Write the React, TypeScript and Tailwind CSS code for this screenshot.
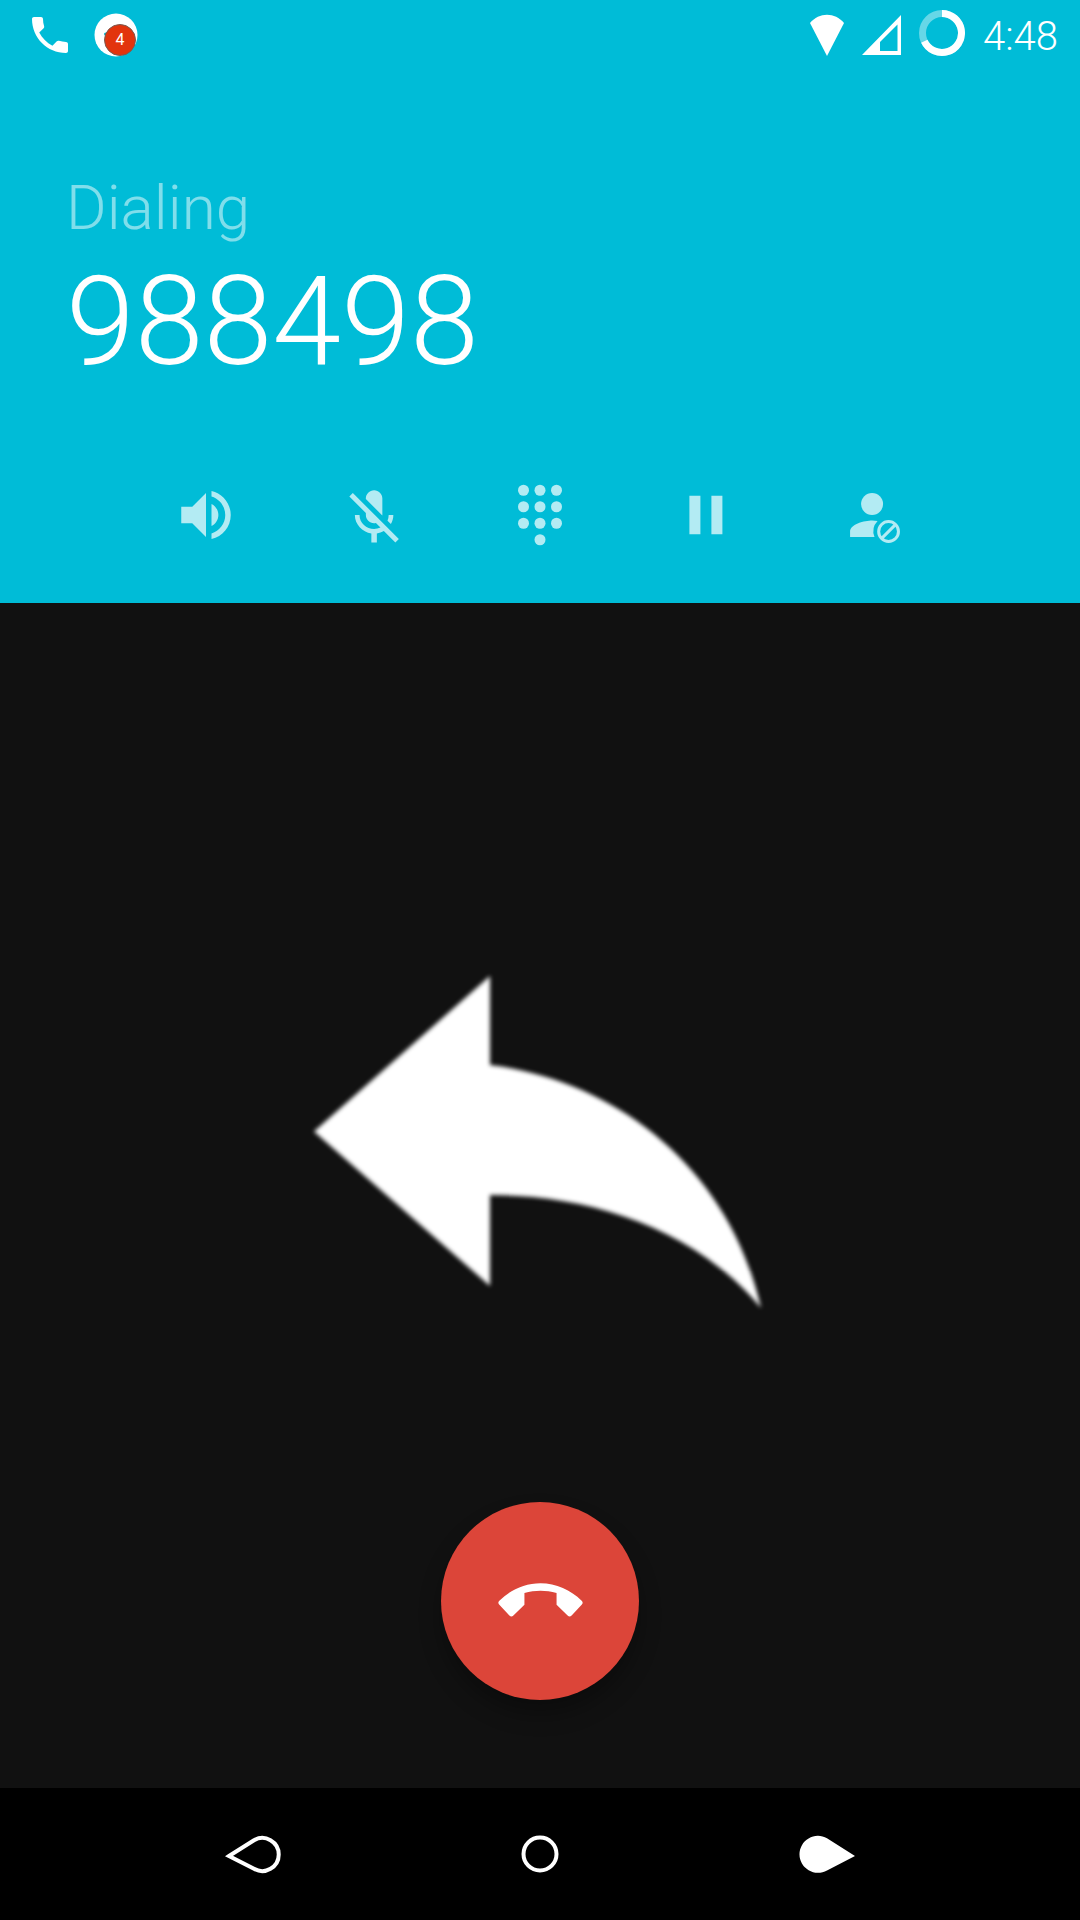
import type { ReactNode } from "react";

function StatusBar() {
  return (
    <div className="flex h-[70px] items-center justify-between pr-[22px] pl-[26px]">
      <div className="flex items-center gap-5">
        <svg className="size-12" viewBox="0 0 24 24" fill="#fff" aria-hidden="true">
          <path d="M20 15.5c-1.25 0-2.45-.2-3.57-.57-.35-.11-.74-.03-1.02.24l-2.2 2.2c-2.83-1.44-5.15-3.75-6.59-6.58l2.2-2.21c.28-.27.36-.66.25-1.01C8.7 6.45 8.5 5.25 8.5 4c0-.55-.45-1-1-1H4c-.55 0-1 .45-1 1 0 9.39 7.61 17 17 17 .55 0 1-.45 1-1v-3.5c0-.55-.45-1-1-1z" />
        </svg>
        <div className="relative size-11">
          <svg className="size-11" viewBox="0 0 44 44" aria-hidden="true">
            <circle cx="22" cy="22" r="21.5" fill="#fff" />
            <circle cx="11.5" cy="21" r="1.5" fill="#00bcd7" />
          </svg>
          <span className="absolute top-[11px] left-[10px] flex size-8 items-center justify-center rounded-full border border-[#7a5a50] bg-[#e2340d] text-base leading-4 text-white">
            4
          </span>
        </div>
      </div>
      <div className="flex items-center gap-[18px]">
        <svg className="h-[42px] w-[34px]" viewBox="0 0 34 42" fill="#fff" aria-hidden="true">
          <path d="M0 9C9-2 25-2 34 9L17 42Z" />
        </svg>
        <svg className="h-10 w-[39px]" viewBox="0 0 39 40" aria-hidden="true">
          <path fill="#fff" fillRule="evenodd" d="M39 0V40H0ZM35.5 9.5L18 27V36H35.5Z" />
        </svg>
        <svg className="h-[50px] w-[46px]" viewBox="0 0 46 50" fill="none" strokeWidth="7" aria-hidden="true">
          <circle cx="23" cy="23" r="19.5" stroke="#fff" strokeOpacity=".4" />
          <path d="M23 3.500A19.500 19.500 0 1 1 5.300 31.200" stroke="#fff" />
        </svg>
        <span className="pt-1 text-[40px] leading-[46px] font-light text-white">4:48</span>
      </div>
    </div>
  );
}

function Control({ label, viewBox = "0 0 24 24", children }: { label: string; viewBox?: string; children: ReactNode }) {
  return (
    <button type="button" aria-label={label} className="flex justify-center text-[#b3ebf3]">
      <svg className="size-[66px]" viewBox={viewBox} fill="currentColor" aria-hidden="true">
        {children}
      </svg>
    </button>
  );
}

const dots = [
  [6, 3], [12, 3], [18, 3],
  [6, 9], [12, 9], [18, 9],
  [6, 15], [12, 15], [18, 15],
  [12, 21],
];

function CallControls() {
  return (
    <div className="mt-[88px] grid grid-cols-5 px-[122px] pb-[55px]">
      <Control label="Speaker">
        <path d="M3 9v6h4l5 5V4L7 9H3zm13.5 3c0-1.77-1.02-3.29-2.5-4.03v8.05c1.48-.73 2.5-2.25 2.5-4.02zM14 3.23v2.06c2.89.86 5 3.54 5 6.71s-2.11 5.85-5 6.71v2.06c4.01-.91 7-4.49 7-8.77s-2.99-7.86-7-8.77z" />
      </Control>
      <Control label="Mute" viewBox="-.4 -1 24 24">
        <path d="M19 11h-1.7c0 .74-.16 1.43-.43 2.05l1.23 1.23c.56-.98.9-2.09.9-3.28zm-4.02.17c0-.06.02-.11.02-.17V5c0-1.66-1.34-3-3-3S9 3.34 9 5v.18l5.98 5.99zM4.27 3L3 4.27l6.01 6.01V11c0 1.66 1.33 3 2.99 3 .22 0 .44-.03.65-.08l1.66 1.66c-.71.33-1.5.52-2.31.52-2.76 0-5.3-2.1-5.3-5.1H5c0 3.41 2.72 6.23 6 6.72V21h2v-3.28c.91-.13 1.77-.45 2.54-.9L19.73 21 21 19.73 4.27 3z" />
      </Control>
      <Control label="Dialpad">
        {dots.map(([x, y]) => (
          <circle key={`${x}-${y}`} cx={x} cy={y} r="2" />
        ))}
      </Control>
      <Control label="Hold" viewBox=".4 0 24 24">
        <path d="M6 19h4V5H6v14zm8-14v14h4V5h-4z" />
      </Control>
      <Control label="Block caller" viewBox="-.3 0 24 24">
        <circle cx="11" cy="8" r="4" />
        <path d="M11 14c-2.670 0-8 1.340-8 4v2h8.880A5.500 5.500 0 0 1 13 14.200Q12 14 11 14z" />
        <g fill="none" stroke="currentColor" strokeWidth="1.1">
          <circle cx="17" cy="18" r="3.6" />
          <path d="M14.500 20.500l5-5" />
        </g>
      </Control>
    </div>
  );
}

function NavButton({ label, children }: { label: string; children: ReactNode }) {
  return (
    <button type="button" aria-label={label} className="flex items-center justify-center">
      <svg className="h-10 w-14" viewBox="0 0 56 40" aria-hidden="true">
        {children}
      </svg>
    </button>
  );
}

export default function App() {
  return (
    <div className="flex min-h-screen flex-col bg-[#111111] font-['Roboto',sans-serif]">
      <header className="bg-[#00bcd7]">
        <StatusBar />
        <div className="px-[66px] pt-[102px]">
          <p className="text-[62px] leading-[72px] font-light text-white/50">Dialing</p>
          <h1 className="mt-[6px] text-[124px] leading-[144px] font-light text-white">988498</h1>
        </div>
        <CallControls />
      </header>
      <main className="flex flex-1 flex-col items-center justify-end pb-[88px]">
        <svg className="mb-[194px] h-[332px] w-[452px] overflow-visible blur-[2px]" viewBox="0 0 452 332" fill="#fff" aria-hidden="true">
          <path d="M0 155.500L176 0V89C300 104 415 190 447 332C380 251 275 219 176 219V310Z" />
        </svg>
        <button
          type="button"
          aria-label="End call"
          className="flex size-[198px] items-center justify-center rounded-full bg-[#dc4539] shadow-[0_14px_22px_rgba(0,0,0,0.3)]"
        >
          <svg className="mb-[2px] h-[34px] w-[85px]" viewBox="0 0 254 100" fill="#fff" aria-hidden="true">
            <path d="M4 52C37 20 80 0 127 0S217 20 250 52Q256 58 250 64L220 96Q214 102 208 96L175 64V29C143 20 111 20 79 29V64L46 96Q40 102 34 96L4 64Q-2 58 4 52Z" />
          </svg>
        </button>
      </main>
      <nav className="grid h-[132px] grid-cols-3 bg-black px-[110px]">
        <NavButton label="Back">
          <path d="M4 22L29 6.200A16.500 16.500 0 1 1 29 34.800Z" fill="none" stroke="#fff" strokeWidth="4" />
        </NavButton>
        <NavButton label="Home">
          <circle cx="28" cy="20" r="16.5" fill="none" stroke="#fff" strokeWidth="4" />
        </NavButton>
        <NavButton label="Recent apps">
          <path d="M56 22L28 4.200A18.500 18.500 0 1 0 28 36.500Z" fill="#fff" />
        </NavButton>
      </nav>
    </div>
  );
}
